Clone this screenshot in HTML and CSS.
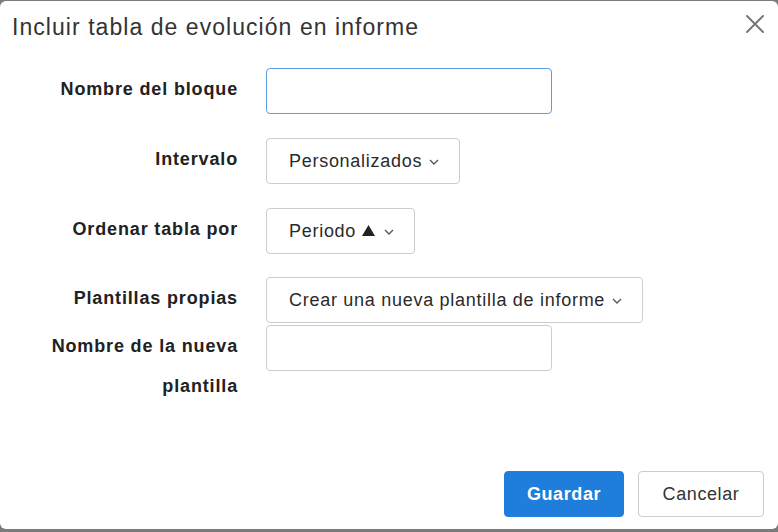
FILE: index.html
```html
<!DOCTYPE html>
<html lang="es">
<head>
<meta charset="utf-8">
<title>Incluir tabla de evolución en informe</title>
<link rel="stylesheet" href="styles.css">
</head>
<body>
<div class="modal">
  <div class="modal-header">
    <h1 class="modal-title">Incluir tabla de evolución en informe</h1>
    <button class="close" type="button" aria-label="Cerrar">
      <svg width="20" height="20" viewBox="0 0 20 20"><path d="M2 2 L18 18 M18 2 L2 18" stroke="#777" stroke-width="2" stroke-linecap="round" fill="none"/></svg>
    </button>
  </div>
  <div class="modal-body">
    <div class="row">
      <label class="label">Nombre del bloque</label>
      <input class="input focus" type="text">
    </div>
    <div class="row">
      <label class="label">Intervalo</label>
      <div class="select">Personalizados<span class="chev"><svg width="10" height="6" viewBox="0 0 10 6"><path d="M1 1 L5 5 L9 1" stroke="#555" stroke-width="1.3" fill="none"/></svg></span></div>
    </div>
    <div class="row before-tight">
      <label class="label">Ordenar tabla por</label>
      <div class="select">Periodo<span class="tri"><svg width="13" height="11" viewBox="0 0 13 11"><path d="M6.5 0 L13 11 L0 11 Z" fill="#222"/></svg></span><span class="chev wide"><svg width="10" height="6" viewBox="0 0 10 6"><path d="M1 1 L5 5 L9 1" stroke="#555" stroke-width="1.3" fill="none"/></svg></span></div>
    </div>
    <div class="row tight">
      <label class="label">Plantillas propias</label>
      <div class="select">Crear una nueva plantilla de informe<span class="chev"><svg width="10" height="6" viewBox="0 0 10 6"><path d="M1 1 L5 5 L9 1" stroke="#555" stroke-width="1.3" fill="none"/></svg></span></div>
    </div>
    <div class="row">
      <label class="label">Nombre de la nueva<br>plantilla</label>
      <input class="input" type="text">
    </div>
  </div>
  <div class="modal-footer">
    <button class="btn primary" type="button">Guardar</button>
    <button class="btn secondary" type="button">Cancelar</button>
  </div>
</div>
</body>
</html>
```
FILE: styles.css
```css
html, body {
  margin: 0;
  padding: 0;
  height: 100%;
}
body {
  background: #7b7b7b;
  font-family: "Liberation Sans", Arial, sans-serif;
  color: #333;
  padding-top: 1px;
  box-sizing: border-box;
}
.modal {
  background: #fff;
  border-radius: 6px;
  height: 528px;
  display: flex;
  flex-direction: column;
}
.modal-header {
  display: flex;
  justify-content: space-between;
  align-items: flex-start;
  padding: 12px 12px 0 12px;
}
.modal-title {
  margin: 0;
  font-weight: normal;
  font-size: 23px;
  line-height: 28px;
  letter-spacing: 1.05px;
  color: #333;
}
.close {
  background: none;
  border: 0;
  padding: 0;
  margin-top: 1px;
  margin-right: 1px;
  cursor: pointer;
}
.modal-body {
  padding: 27px 0 0 0;
  display: flex;
  flex-direction: column;
}
.row {
  display: flex;
  align-items: flex-start;
  margin-bottom: 24px;
}
.row.before-tight {
  margin-bottom: 23px;
}
.row.tight {
  margin-bottom: 2px;
}
.label {
  width: 238px;
  text-align: right;
  font-weight: bold;
  font-size: 18px;
  line-height: 40px;
  letter-spacing: 0.85px;
  padding-top: 1px;
  margin-right: 28px;
  color: #222;
}
.input {
  width: 286px;
  height: 46px;
  box-sizing: border-box;
  border: 1px solid #ccc;
  border-radius: 4px;
  margin: 0;
  padding: 0 12px;
  font: inherit;
}
.input.focus {
  border-color: #5d9ee3;
}
.select {
  height: 46px;
  box-sizing: border-box;
  border: 1px solid #ccc;
  border-radius: 4px;
  padding: 0 20px 0 22px;
  display: flex;
  align-items: center;
  font-size: 18px;
  letter-spacing: 0.72px;
  color: #2a2a2a;
}
.tri {
  display: inline-flex;
  margin-left: 6px;
  margin-top: -1px;
}
.chev {
  display: inline-flex;
  margin-left: 7px;
  margin-top: 2px;
}
.chev.wide {
  margin-left: 9px;
}
.modal-footer {
  margin-top: auto;
  display: flex;
  justify-content: flex-end;
  gap: 14px;
  padding: 0 14px 12px 0;
}
.btn {
  height: 46px;
  border: 1px solid #ccc;
  border-radius: 4px;
  background: #fff;
  font-family: inherit;
  font-size: 18px;
  letter-spacing: 0.6px;
  color: #333;
  padding: 0;
}
.btn.primary {
  width: 120px;
  background: #1f7ddb;
  border-color: #1f7ddb;
  color: #fff;
  font-weight: bold;
}
.btn.secondary {
  width: 126px;
}
```
